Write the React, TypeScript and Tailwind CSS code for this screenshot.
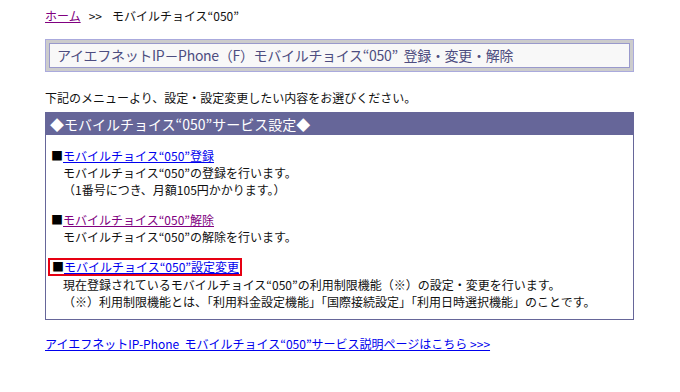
import React from "react";

const font = { fontFamily: '"Noto Sans CJK JP", "Liberation Sans", sans-serif' };

type Item = {
  title: string;
  visited?: boolean;
  boxed?: boolean;
  lines: string[];
};

const items: Item[] = [
  {
    title: "モバイルチョイス“050”登録",
    lines: ["モバイルチョイス“050”の登録を行います。", "（1番号につき、月額105円かかります。）"],
  },
  {
    title: "モバイルチョイス“050”解除",
    visited: true,
    lines: ["モバイルチョイス“050”の解除を行います。"],
  },
  {
    title: "モバイルチョイス“050”設定変更",
    boxed: true,
    lines: [
      "現在登録されているモバイルチョイス“050”の利用制限機能（※）の設定・変更を行います。",
      "（※）利用制限機能とは、「利用料金設定機能」「国際接続設定」「利用日時選択機能」のことです。",
    ],
  },
];

export default function App() {
  return (
    <div className="w-[680px] h-[392px] bg-white text-[12px] leading-[17px] text-[#111]" style={font}>
      <div className="pl-[45px] pt-[7px]">
        {/* パンくず */}
        <div className="flex items-center">
          <a href="#" className="text-[#800080] underline">ホーム</a>
          <span className="ml-[8px]">&gt;&gt;</span>
          <span className="ml-[10px]">モバイルチョイス“050”</span>
        </div>

        {/* タイトル */}
        <div className="mt-[15px] w-[589px] border border-[#aaaadd] bg-[#cccccc] p-[3px]">
          <div className="border border-[#9999cc] bg-[#f8f8f8] px-[7px] py-[2px] text-[14px] leading-[19px] text-[#4d4d80] tracking-[-0.3px]">
            アイエフネットIP－Phone（F）モバイルチョイス“050”&nbsp;&nbsp;登録・変更・解除
          </div>
        </div>

        <p className="mt-[17px]">下記のメニューより、設定・設定変更したい内容をお選びください。</p>

        {/* サービス設定 */}
        <div className="mt-[6px] w-[589px] border border-[#666699]">
          <div className="bg-[#666699] px-[4px] h-[22px] flex items-center text-white text-[14px]">
            ◆モバイルチョイス“050”サービス設定◆
          </div>
          <div className="pl-[5px] pt-[12px] pb-[9px]">
            {items.map((item, idx) => (
              <div key={idx} className={idx === 1 ? "mt-[13px]" : idx === 2 ? "mt-[13px]" : ""}>
                <div
                  className={
                    item.boxed
                      ? "inline-block -ml-[3px] pl-[2px] pr-[1px] border-2 border-[#e60012] leading-[14px]"
                      : ""
                  }
                >
                  <span className="text-black">■</span>
                  <a
                    href="#"
                    className={item.visited ? "text-[#800080] underline" : "text-[#0000ee] underline"}
                  >
                    {item.title}
                  </a>
                </div>
                {item.lines.map((line, i) => (
                  <div key={i} className="pl-[12px]">
                    {line}
                  </div>
                ))}
              </div>
            ))}
          </div>
        </div>

        <div className="mt-[15px]">
          <a href="#" className="text-[#0000ee] underline">
            アイエフネットIP-Phone&nbsp;&nbsp;モバイルチョイス“050”サービス説明ページはこちら&nbsp;&gt;&gt;&gt;
          </a>
        </div>
      </div>
    </div>
  );
}
